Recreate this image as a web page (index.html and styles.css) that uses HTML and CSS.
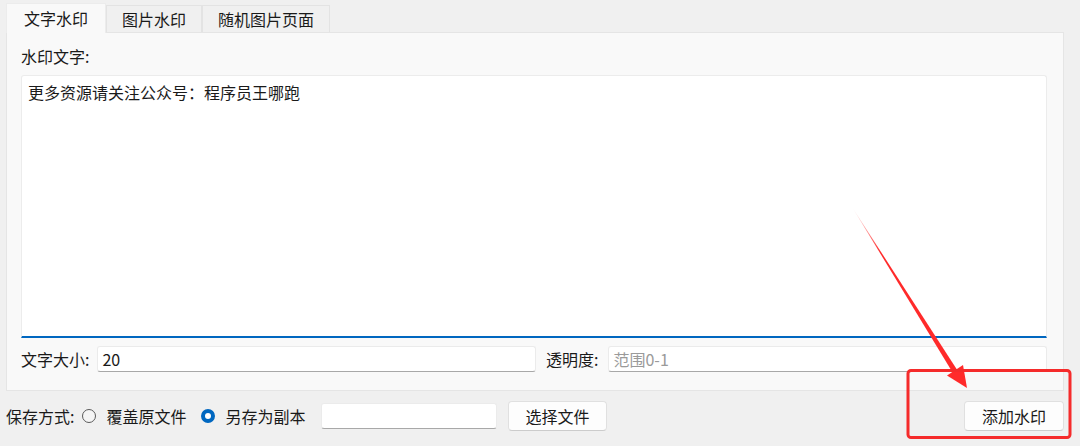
FILE: index.html
```html
<!DOCTYPE html>
<html lang="zh-CN">
<head>
    <meta charset="UTF-8">
    <meta name="viewport" content="width=device-width, initial-scale=1.0">
    <title>水印工具</title>
    <link rel="stylesheet" href="styles.css">
</head>
<body>
    <div class="window">
        <div class="tabs">
            <div class="tab active">文字水印</div>
            <div class="tab">图片水印</div>
            <div class="tab">随机图片页面</div>
        </div>
        <div class="panel">
            <div class="field-label">水印文字:</div>
            <div class="text-area">更多资源请关注公众号：程序员王哪跑</div>
            <div class="option-row">
                <span class="row-label">文字大小:</span>
                <div class="line-input">20</div>
                <span class="row-label second">透明度:</span>
                <div class="line-input placeholder">范围0-1</div>
            </div>
        </div>
        <div class="bottom-bar">
            <span class="row-label">保存方式:</span>
            <label class="radio"><span class="dot"></span>覆盖原文件</label>
            <label class="radio checked"><span class="dot"></span>另存为副本</label>
            <div class="line-input file-path"></div>
            <button class="btn">选择文件</button>
            <button class="btn add">添加水印</button>
        </div>

        <!-- annotation drawn over the screenshot -->
        <svg class="markup" width="1080" height="446" viewBox="0 0 1080 446">
            <defs>
                <linearGradient id="fade" x1="852" y1="207" x2="966" y2="387" gradientUnits="userSpaceOnUse">
                    <stop offset="0" stop-color="#ff2a2a" stop-opacity="0"/>
                    <stop offset="0.25" stop-color="#ff2a2a" stop-opacity="1"/>
                    <stop offset="1" stop-color="#ff2a2a"/>
                </linearGradient>
            </defs>
            <polygon points="852,207 958.5,372 954,374.8" fill="url(#fade)"/>
            <polygon points="967,388 947,375.5 963,365" fill="#ff2a2a"/>
            <rect x="908" y="370.5" width="162" height="67" rx="3" fill="none" stroke="#f52b2b" stroke-width="3"/>
        </svg>
    </div>
</body>
</html>
```
FILE: styles.css
```css
* {
    box-sizing: border-box;
}

body {
    margin: 0;
    background-color: #f0f0f0;
    font-family: "Noto Sans CJK SC", "Noto Sans", sans-serif;
    font-size: 16px;
    color: #1a1a1a;
}

.window {
    position: relative;
    width: 1080px;
    height: 446px;
    padding: 2px 16px 0 6px;
}

.tabs {
    display: flex;
    align-items: flex-end;
    height: 30px;
}

.tab {
    height: 27px;
    padding: 0 15px;
    line-height: 26px;
    background-color: #f0f0f0;
    border: 1px solid #e3e3e3;
    border-bottom: none;
    color: #1a1a1a;
}

.tab.active {
    height: 30px;
    padding: 0 17px;
    line-height: 28px;
    background-color: #f9f9f9;
    border-color: #ececec;
    position: relative;
    z-index: 1;
    margin-bottom: -1px;
}

.panel {
    background-color: #f9f9f9;
    border: 1px solid #e5e5e5;
    padding: 11px 16px 18px 14px;
}

.field-label {
    line-height: 24px;
    margin-bottom: 7px;
}

.text-area {
    height: 263px;
    background-color: #ffffff;
    border: 1px solid #ececec;
    border-bottom: 2px solid #0067c0;
    border-radius: 3px 3px 0 0;
    padding: 3px 6px;
    line-height: 26px;
}

.option-row {
    display: grid;
    grid-template-columns: auto 1fr auto 1fr;
    align-items: center;
    margin-top: 8px;
}

.row-label {
    padding-right: 8px;
    white-space: nowrap;
}

.row-label.second {
    padding-left: 10px;
    padding-right: 10px;
}

.line-input {
    height: 26px;
    background-color: #ffffff;
    border: 1px solid #ebebeb;
    border-bottom: 1px solid #a8a8a8;
    border-radius: 3px;
    padding: 0 4px;
    line-height: 24px;
    font-size: 16px;
}

.line-input.placeholder {
    color: #9a9a9a;
}

.bottom-bar {
    display: flex;
    align-items: center;
    margin-top: 10px;
    height: 29px;
}

.bottom-bar .row-label {
    padding-right: 8px;
}

.radio {
    display: flex;
    align-items: center;
    margin-right: 15px;
}

.dot {
    width: 14px;
    height: 14px;
    border: 1px solid #5a5a5a;
    border-radius: 50%;
    margin-right: 10px;
    background-color: #f5f5f5;
}

.radio.checked .dot {
    border: 4px solid #0067c0;
    background-color: #ffffff;
}

.radio.checked {
    margin-right: 16px;
}

.file-path {
    width: 176px;
}

.btn {
    height: 30px;
    padding: 0 16px;
    font-family: inherit;
    font-size: 16px;
    color: #1a1a1a;
    background-color: #fdfdfd;
    border: 1px solid #e0e0e0;
    border-bottom-color: #cccccc;
    border-radius: 4px;
    margin-left: 11px;
}

.btn.add {
    margin-left: auto;
    padding: 0 17px;
}

.markup {
    position: absolute;
    top: 0;
    left: 0;
    pointer-events: none;
}
```
